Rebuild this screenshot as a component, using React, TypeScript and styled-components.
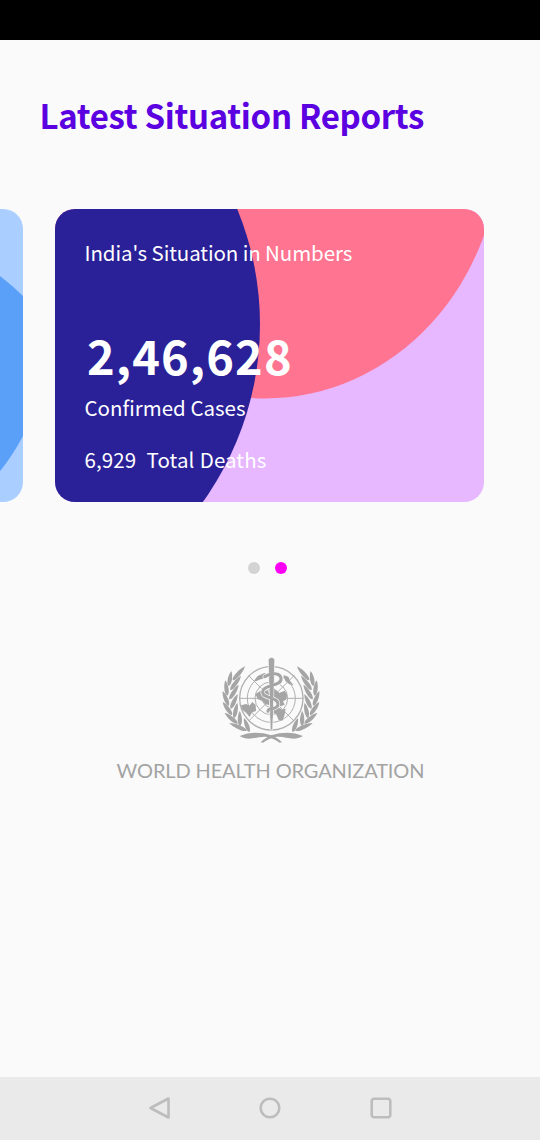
import React from 'react';
import styled, { createGlobalStyle } from 'styled-components';

const GlobalStyle = createGlobalStyle`
  * { box-sizing: border-box; }
  body { margin: 0; background: #fafafa; }
`;

const Screen = styled.div`
  width: 540px;
  height: 1140px;
  display: flex;
  flex-direction: column;
  overflow: hidden;
  background: #fafafa;
  font-family: 'Noto Sans CJK SC', 'Open Sans', sans-serif;
`;

const StatusBar = styled.div`
  height: 40px;
  flex: none;
  background: #000;
`;

const Content = styled.main`
  flex: 1;
  display: flex;
  flex-direction: column;
  align-items: center;
`;

const Title = styled.h1`
  align-self: flex-start;
  margin: 49px 0 0 39.5px;
  height: 52px;
  line-height: 52px;
  font-size: 33px;
  font-weight: 700;
  letter-spacing: -0.33px;
  white-space: nowrap;
  color: #5b00e0;
`;

const Carousel = styled.section`
  width: 540px;
  margin-top: 68px;
  padding-right: 1px;
  display: flex;
  justify-content: center;
  gap: 32px;
`;

const Card = styled.article<{ $tone: string }>`
  position: relative;
  flex: none;
  width: 429px;
  height: 293px;
  border-radius: 20px;
  overflow: hidden;
  background: ${(p) => p.$tone};
`;

const PreviousCard = styled(Card)`
  margin-left: -461px;
`;

const CardArt = styled.svg`
  position: absolute;
  inset: 0;
`;

const CardBody = styled.div`
  position: relative;
  display: flex;
  flex-direction: column;
  align-items: flex-start;
  padding: 27px 0 0 29.5px;
  color: #fff;
`;

const CardText = styled.p<{ $gap?: number; $track?: number; $word?: number }>`
  margin: ${(p) => p.$gap ?? 0}px 0 0;
  height: 32px;
  line-height: 32px;
  font-size: 20.5px;
  letter-spacing: ${(p) => p.$track ?? 0}px;
  word-spacing: ${(p) => p.$word ?? 0}px;
  white-space: pre;
`;

const Count = styled.p`
  margin: 51px 0 0 2.5px;
  height: 72px;
  line-height: 72px;
  font-size: 47px;
  font-weight: 700;
  letter-spacing: 1.1px;
`;

const Dots = styled.div`
  display: flex;
  gap: 15px;
  margin-top: 60px;
  margin-left: -5px;
`;

const Dot = styled.span<{ $active?: boolean }>`
  width: 12px;
  height: 12px;
  border-radius: 50%;
  background: ${(p) => (p.$active ? '#fb00f5' : '#d3d3d3')};
`;

const EmblemSvg = styled.svg`
  display: block;
  margin-top: 71px;
`;

const OrgName = styled.p`
  margin: 0;
  padding-left: 1px;
  height: 30px;
  line-height: 30px;
  font-family: Lato, sans-serif;
  font-size: 20px;
  letter-spacing: -0.12px;
  color: #a3a3a3;
  white-space: nowrap;
`;

const NavBar = styled.nav`
  height: 63px;
  flex: none;
  display: flex;
  justify-content: center;
  align-items: center;
  padding-bottom: 1px;
  gap: 87px;
  background: #eaeaea;
`;

const NavIcon = styled.svg`
  display: block;
  fill: none;
  stroke: #bdbdbd;
  stroke-width: 2.6;
  stroke-linejoin: round;
`;

/* Each leaf runs from its base on the stem to its tip. */
const LEAVES = [
  [68, 106, 105, 64],
  [61, 135, 93, 92],
  [58, 163, 86, 119],
  [62, 191, 83, 147],
  [72, 219, 82, 173],
  [90, 243, 89, 198],
  [118, 261, 102, 219],
  [56, 123, 64, 78],
  [52, 152, 46, 106],
  [56, 182, 38, 138],
  [66, 210, 38, 171],
  [83, 236, 44, 203],
  [110, 257, 58, 234],
];

function Wreath() {
  return (
    <g>
      {LEAVES.map(([x1, y1, x2, y2]) => {
        const length = Math.hypot(x2 - x1, y2 - y1);
        const angle = (Math.atan2(y2 - y1, x2 - x1) * 180) / Math.PI;
        return (
          <path
            key={`${x1}-${y1}`}
            transform={`translate(${x1} ${y1}) rotate(${angle})`}
            d={`M0 0C${length * 0.1} -9 ${length * 0.7} -8 ${length} 0C${length * 0.7} 8 ${length * 0.1} 9 0 0Z`}
          />
        );
      })}
    </g>
  );
}

function Emblem() {
  return (
    <EmblemSvg width="120" height="110" viewBox="0 0 360 330" fill="#a5a5a5">
      <g fill="none" stroke="#b0b0b0" strokeWidth="3">
        <circle cx="184" cy="160" r="95" strokeWidth="4" />
        <circle cx="184" cy="160" r="72" />
        <circle cx="184" cy="160" r="49" />
        <circle cx="184" cy="160" r="27" />
        <path d="M88 160H280M184 64V256M116 92L252 228M252 92L116 228" />
      </g>
      <path d="M132 107L143 93L163 84L174 89L164 99L148 104L138 109Z" />
      <path d="M220 90L235 95L241 109L251 121L238 118L226 108Z" />
      <path d="M136 148L154 136L174 137L180 150L178 180L166 178L157 168L144 163Z" />
      <path d="M192 130L207 144L224 137L232 150L228 164L219 169L224 179L212 184L197 175L186 158Z" />
      <path d="M93 181L109 177L118 182L127 171L137 180L138 198L126 202L119 216L108 203L97 194Z" />
      <path d="M190 190L203 185L216 194L227 191L223 213L217 227L206 225L198 207L190 203Z" />
      <Wreath />
      <g transform="translate(366 0) scale(-1 1)">
        <Wreath />
      </g>
      <path d="M89 273C115 262 148 259 184 271C198 276 208 284 216 292L209 293C199 286 188 280 174 277C146 270 119 292 89 273Z" />
      <path d="M279 273C253 262 220 259 184 271C170 276 160 284 152 292L159 293C169 286 180 280 194 277C222 270 249 292 279 273Z" />
      <path d="M175 49C172 34 197 34 194 49L188 255H181Z" stroke="#fafafa" strokeWidth="2" />
      <g fill="none" strokeLinecap="round">
        <path
          d="M164 95C178 87 210 78 213 101C216 125 159 117 158 141C157 163 206 154 204 178C202 198 172 185 174 199"
          stroke="#fafafa"
          strokeWidth="13"
        />
        <path
          d="M164 95C178 87 210 78 213 101C216 125 159 117 158 141C157 163 206 154 204 178C202 198 172 185 174 199"
          stroke="#a5a5a5"
          strokeWidth="9"
        />
      </g>
      <path d="M177 43H192L188 220H182Z" />
    </EmblemSvg>
  );
}

export default function App() {
  return (
    <Screen>
      <GlobalStyle />
      <StatusBar />
      <Content>
        <Title>Latest Situation Reports</Title>
        <Carousel>
          <PreviousCard $tone="#a9ceff">
            <CardArt width="429" height="293" viewBox="0 0 429 293">
              <path d="M350 40Q383 48 405.500 66.500Q418 76 429 87V227Q419 246 405.500 263L390 280H350Z" fill="#5ba0f8" />
            </CardArt>
          </PreviousCard>
          <Card $tone="#e7b7ff">
            <CardArt width="429" height="293" viewBox="0 0 429 293">
              <ellipse cx="210" cy="-66.500" rx="235" ry="256" fill="#ff7591" />
              <circle cx="-99" cy="115.500" r="304" fill="#2a2198" />
            </CardArt>
            <CardBody>
              <CardText $track={-0.1}>India's Situation in Numbers</CardText>
              <Count>2,46,628</Count>
              <CardText>Confirmed Cases</CardText>
              <CardText $gap={20} $track={0.1} $word={0.5}>
                6,929  Total Deaths
              </CardText>
            </CardBody>
          </Card>
        </Carousel>
        <Dots>
          <Dot />
          <Dot $active />
        </Dots>
        <Emblem />
        <OrgName>WORLD HEALTH ORGANIZATION</OrgName>
      </Content>
      <NavBar>
        <NavIcon width="24" height="24" viewBox="0 0 24 24">
          <path d="M21.500 2.500V21.500L3.500 12Z" />
        </NavIcon>
        <NavIcon width="24" height="24" viewBox="0 0 24 24">
          <circle cx="12" cy="12" r="9.300" />
        </NavIcon>
        <NavIcon width="24" height="24" viewBox="0 0 24 24">
          <rect x="2.700" y="2.700" width="18.600" height="18.600" rx="2.500" />
        </NavIcon>
      </NavBar>
    </Screen>
  );
}
